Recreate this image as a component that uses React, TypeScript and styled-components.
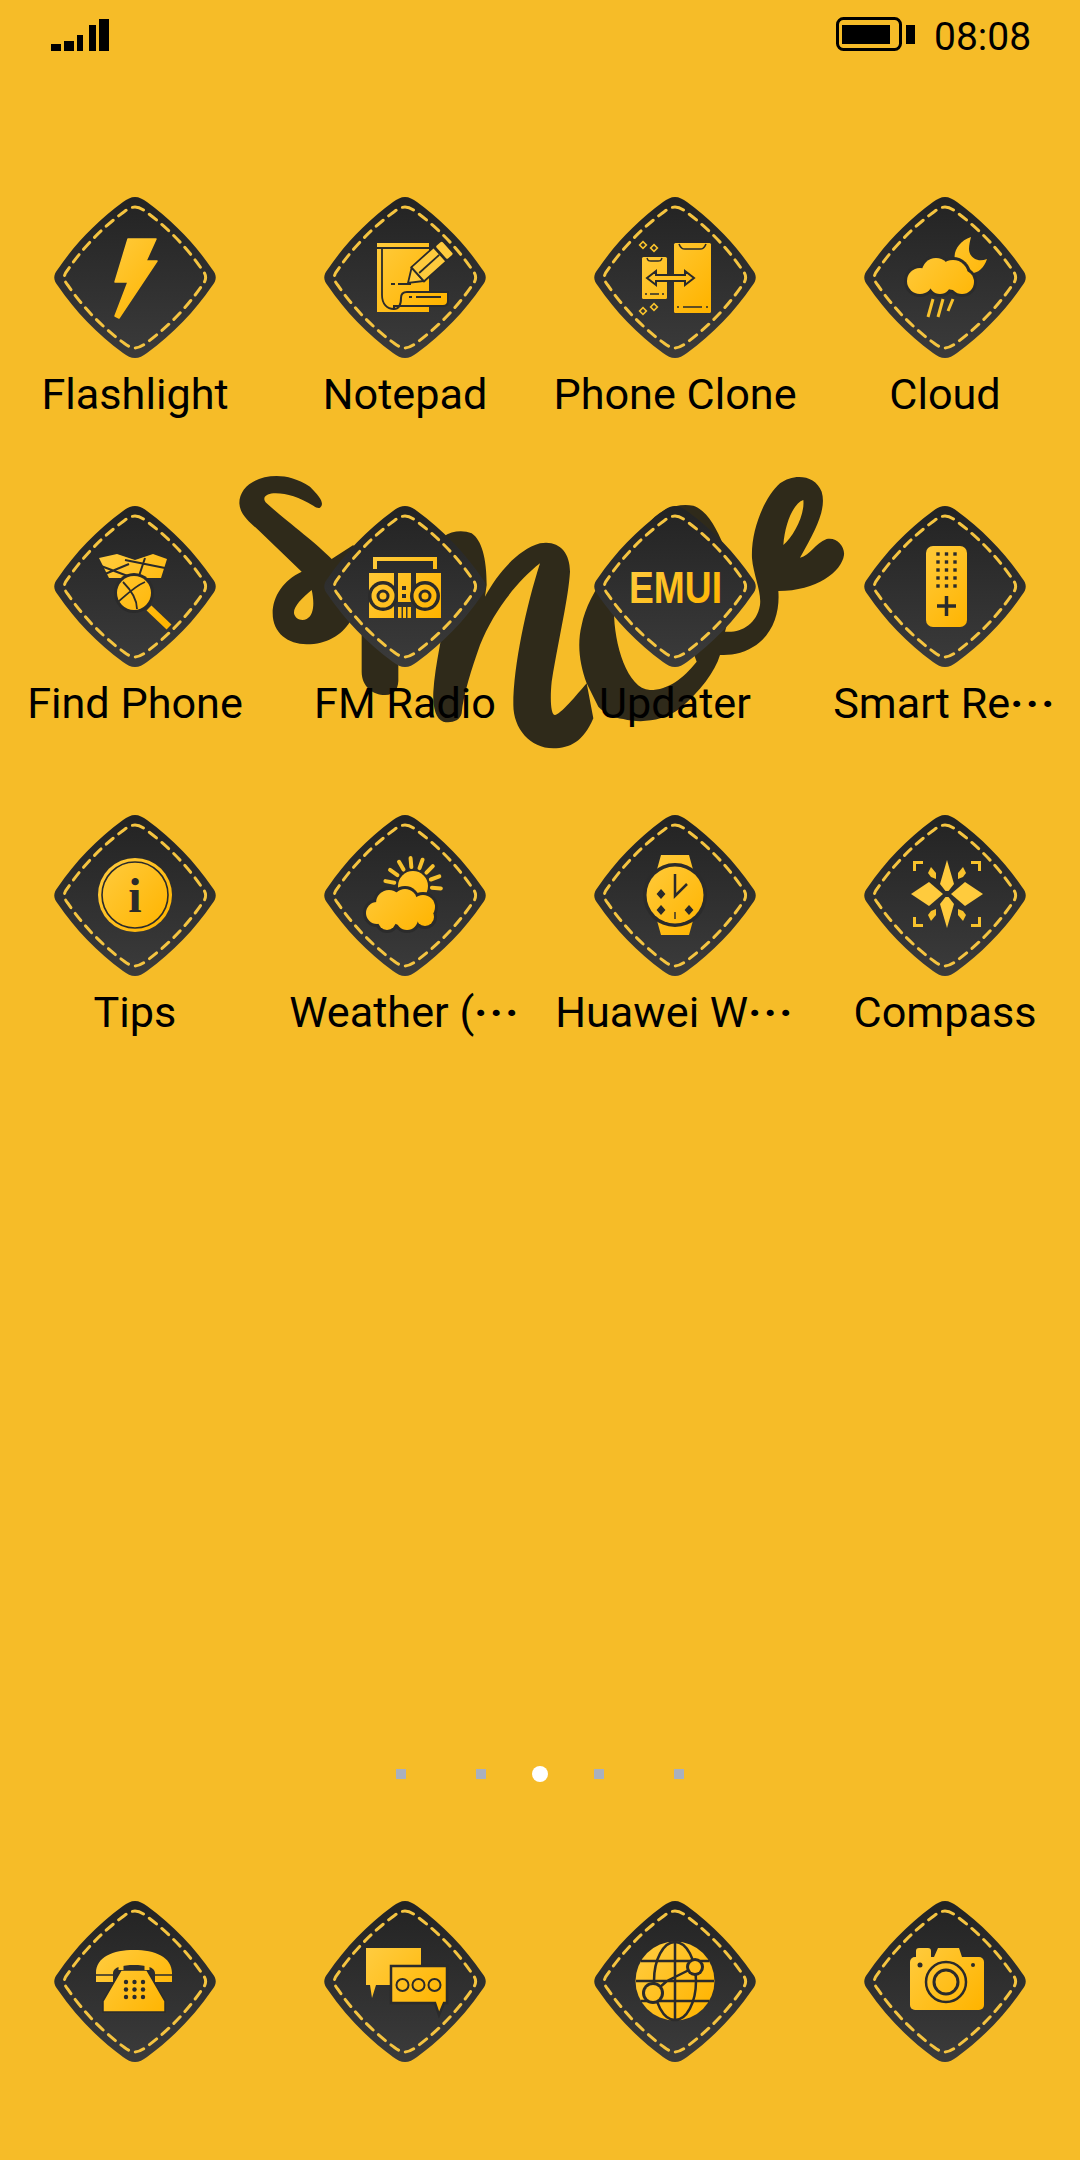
import * as React from 'react'
import styled, {createGlobalStyle} from 'styled-components'

const DARK = '#2b2b2b'
const GOLD = 'url(#glyphGold)'
const BADGE_PATH = 'M80 0C84 0 88 2 92 5C118 24 140 47 157 72C162 78 162 83 157 89C140 114 118 137 92 156C88 159 84 161 80 161C76 161 72 159 68 156C42 137 20 114 3 89C-2 83 -2 78 3 72C20 47 42 24 68 5C72 2 76 0 80 0Z'

const GlobalStyle = createGlobalStyle`
    html, body {
        margin: 0;
        padding: 0;
        background: #f6bc28;
    }
`

const Screen = styled.div`
    position: relative;
    width: 1080px;
    height: 2160px;
    overflow: hidden;
    background: #f6bc28;
    font-family: Roboto, "Liberation Sans", sans-serif;
    color: #000;
`

const Defs = styled.svg`
    position: absolute;
    width: 0;
    height: 0;
`

const Logo = styled.svg`
    position: absolute;
    left: 230px;
    top: 465px;
    width: 630px;
    height: 300px;
`

const Content = styled.div`
    position: relative;
    display: flex;
    flex-direction: column;
`

const StatusBar = styled.div`
    height: 70px;
    padding: 0 50px 0 51px;
    display: flex;
    justify-content: space-between;
`

const SignalIcon = styled.svg`
    width: 58px;
    height: 70px;
`

const StatusRight = styled.div`
    display: flex;
`

const BatteryIcon = styled.svg`
    width: 79px;
    height: 70px;
    margin-right: 19px;
`

const Clock = styled.div`
    width: 96px;
    padding-top: 15px;
    font-size: 39px;
    line-height: 45px;
    white-space: nowrap;
`

const AppGrid = styled.div`
    margin-top: 127px;
    display: grid;
    grid-template-columns: repeat(4, 270px);
    grid-auto-rows: 309px;
`

const Cell = styled.div`
    display: flex;
    flex-direction: column;
    align-items: center;
`

const BadgeSvg = styled.svg`
    display: block;
    width: 160px;
    height: 161px;
    overflow: visible;
`

const Label = styled.div`
    margin-top: 12px;
    font-size: 43.2px;
    line-height: 50px;
    white-space: nowrap;
`

const Cut = styled.span`
    font-weight: 700;
    letter-spacing: 2.5px;
`

const Pager = styled.div`
    margin-top: 642px;
    height: 16px;
    display: flex;
    justify-content: center;
    align-items: center;
    gap: 46px;
`

const Dot = styled.span<{$active?: boolean}>`
    display: block;
    width: ${p => p.$active ? 16 : 10}px;
    height: ${p => p.$active ? 16 : 10}px;
    border-radius: ${p => p.$active ? '50%' : '0'};
    background: ${p => p.$active ? '#fff' : '#a9b0be'};

    &:first-child {
        margin-right: 24px;
    }

    &:last-child {
        margin-left: 24px;
    }
`

const Dock = styled.div`
    margin-top: 119px;
    display: grid;
    grid-template-columns: repeat(4, 270px);
    justify-items: center;
`

const Badge = ({children}: {children: React.ReactNode}) => (
    <BadgeSvg viewBox='0 0 160 161'>
        <path d={BADGE_PATH} fill='url(#badgeFill)'/>
        <path
            d={BADGE_PATH}
            transform='translate(80 80.5) scale(.875) translate(-80 -80.5)'
            fill='none'
            stroke='#f5c440'
            strokeWidth='3.4'
            strokeLinecap='round'
            strokeDasharray='10.5 8'
        />
        {children}
    </BadgeSvg>
)

const Puff = ({circles, gap}: {circles: number[][], gap: number}) => (
    <>
        {circles.map(([x, y, r]) => <circle key={`o${x}${y}`} cx={x} cy={y} r={r + gap} fill={DARK}/>)}
        {circles.map(([x, y, r]) => <circle key={`f${x}${y}`} cx={x} cy={y} r={r} fill={GOLD}/>)}
    </>
)

const Flash = () => (
    <path
        d='M73 42H101L91 64H102L64 121L60 119L73 85H60Z'
        fill={GOLD}
        stroke={GOLD}
        strokeWidth='1.5'
        strokeLinejoin='round'
    />
)

const Note = () => (
    <g>
        <rect x='52' y='46' width='52' height='69' fill={GOLD}/>
        <path d='M52 51H105M57 51V98C57 107 62 112 69 112M66 87H70M73 87H86' stroke={DARK} strokeWidth='1.8' fill='none'/>
        <path d='M69 112C75 112 76 107 76 101C76 97 78 95 82 95H123V104C123 107 121 109 118 109H69Z' fill={GOLD} stroke={DARK} strokeWidth='2'/>
        <path d='M84 100H87M91 100H116' stroke={DARK} strokeWidth='2'/>
        <g transform='translate(83 86) rotate(-42)' stroke={DARK} strokeWidth='1.8' fill={GOLD}>
            <path d='M0 0L13-9V9Z'/>
            <rect x='13' y='-9.5' width='30' height='19'/>
            <rect x='44' y='-9.5' width='10' height='19' rx='2.5'/>
            <path d='M15 0H42' fill='none'/>
        </g>
    </g>
)

const PhoneClone = () => (
    <g>
        <rect x='79' y='46' width='37' height='70' rx='1.5' fill={GOLD}/>
        <path d='M84 47C86 52 88 52 90 52H105C107 52 109 52 111 47' stroke={DARK} strokeWidth='1.6' fill='none'/>
        <path d='M82 110H84M88 110H107M111 110H113' stroke={DARK} strokeWidth='1.6'/>
        <rect x='47' y='60' width='25' height='42' rx='1.5' fill={GOLD}/>
        <path d='M52 61C53 64 54 64 56 64H63C65 64 66 64 67 61' stroke={DARK} strokeWidth='1.4' fill='none'/>
        <path d='M50 97H52M55 97H64M67 97H69' stroke={DARK} strokeWidth='1.6'/>
        <path d='M52 81L61 74V78H90V74L99 81L90 88V84H61V88Z' fill={GOLD} stroke={DARK} strokeWidth='2'/>
        {[[48, 48], [59, 51], [48, 114], [59, 110]].map(([x, y]) => (
            <rect key={`${x}${y}`} x={x - 2.4} y={y - 2.4} width='4.8' height='4.8' transform={`rotate(45 ${x} ${y})`} fill='none' stroke='#f8c22c' strokeWidth='1.6'/>
        ))}
    </g>
)

const CloudIcon = () => (
    <g>
        <path d='M106 40C88 46 84 66 98 74C108 80 118 74 122 62C112 66 104 60 104 52C104 48 105 44 106 40Z' fill={GOLD}/>
        <Puff gap={3} circles={[[55, 84, 13], [71, 75, 14], [88, 78, 15], [97, 85, 12], [75, 86, 11]]}/>
        <path d='M68 102L63 120M78 102L73 120M88 102L83 114' stroke='#f8c22c' strokeWidth='3'/>
    </g>
)

const FindPhone = () => (
    <g>
        <path d='M44 52L62 48L80 54L98 48L112 53L106 72H54Z' fill={GOLD}/>
        <path d='M46 60L78 72M70 54L110 62M50 68L74 58M90 52L84 70' stroke={DARK} strokeWidth='2' fill='none'/>
        <circle cx='79' cy='87' r='20' fill={DARK}/>
        <circle cx='79' cy='87' r='17' fill={GOLD}/>
        <path d='M68 76C76 84 82 94 82 103M90 76C80 80 70 90 63 96' stroke={DARK} strokeWidth='1.8' fill='none'/>
        <path d='M94 102L114 121' stroke={GOLD} strokeWidth='7'/>
    </g>
)

const Radio = () => (
    <g>
        <path d='M50 63V53H110V63' fill='none' stroke={GOLD} strokeWidth='4'/>
        <rect x='44' y='67' width='25' height='45' fill={GOLD}/>
        <rect x='91' y='67' width='25' height='45' fill={GOLD}/>
        <rect x='73' y='67' width='13' height='29' fill={GOLD}/>
        <path d='M73 101H76.5V112H73ZM78 101H81V112H78ZM82.5 101H86V112H82.5Z' fill={GOLD}/>
        <path d='M77 80H81V84H77ZM77 88H81V92H77Z' fill={DARK}/>
        {[58, 100].map(x => (
            <g key={x}>
                <circle cx={x} cy='90' r='15' fill={DARK}/>
                <circle cx={x} cy='90' r='11.5' fill={GOLD}/>
                <circle cx={x} cy='90' r='6.5' fill={DARK}/>
                <circle cx={x} cy='90' r='3.5' fill={GOLD}/>
            </g>
        ))}
    </g>
)

const Emui = () => (
    <text
        x='34'
        y='97'
        fontFamily='"Liberation Sans", sans-serif'
        fontWeight='700'
        fontSize='44'
        textLength='93'
        lengthAdjust='spacingAndGlyphs'
        fill={GOLD}
    >
        EMUI
    </text>
)

const Remote = () => (
    <g>
        <rect x='61' y='40' width='41' height='81' rx='7' fill={GOLD}/>
        {[48, 56, 64, 72, 80].flatMap(y => [73, 81.5, 90].map(x => (
            <rect key={`${x}${y}`} x={x - 1.7} y={y - 1.7} width='3.4' height='3.4' fill={DARK}/>
        )))}
        <path d='M81.5 90V110M72 100H91' stroke={DARK} strokeWidth='3.5'/>
    </g>
)

const Tips = () => (
    <g>
        <circle cx='80' cy='80' r='37' fill={GOLD}/>
        <circle cx='80' cy='80' r='33' fill='none' stroke={DARK} strokeWidth='1.6'/>
        <text x='80' y='97' textAnchor='middle' fontFamily='"Liberation Serif", serif' fontWeight='700' fontSize='48' fill={DARK}>i</text>
    </g>
)

const Weather = () => (
    <g>
        <circle cx='88' cy='71' r='15' fill={GOLD}/>
        {[-170, -145, -120, -95, -70, -45, -20, 5].map(a => {
            const rad = a * Math.PI / 180
            return (
                <path
                    key={a}
                    d={`M${88 + 19 * Math.cos(rad)} ${71 + 19 * Math.sin(rad)}L${88 + 28 * Math.cos(rad)} ${71 + 28 * Math.sin(rad)}`}
                    stroke='#f8c22c'
                    strokeWidth='4'
                    strokeLinecap='round'
                />
            )
        })}
        <Puff gap={3} circles={[[52, 98, 11], [64, 88, 13], [80, 86, 12], [98, 92, 12], [100, 102, 9], [82, 104, 11], [62, 106, 9], [76, 96, 14]]}/>
    </g>
)

const Watch = () => (
    <g>
        <path d='M66 40H94L99 58H61ZM61 102H99L94 120H66Z' fill={GOLD}/>
        <circle cx='80' cy='80' r='32' fill={DARK}/>
        <circle cx='80' cy='80' r='28.5' fill={GOLD}/>
        <path d='M80 59V81L92 69' fill='none' stroke={DARK} strokeWidth='2.5'/>
        <path d='M66 75L69.5 79L66 83L62.5 79ZM66 91L69.5 95L66 99L62.5 95ZM94 91L97.5 95L94 99L90.5 95ZM80 97V104' fill={DARK} stroke={DARK} strokeWidth='1.4'/>
    </g>
)

const Compass = () => (
    <g transform='translate(82 79)'>
        {[[1, 1], [-1, 1], [1, -1], [-1, -1]].map(([sx, sy]) => (
            <g key={`${sx}${sy}`} transform={`scale(${sx} ${sy})`}>
                <path d='M0-34L7-10L1.5-3H0Z' fill={GOLD}/>
                <path d='M36 0L18-12L4 0Z' fill={GOLD}/>
                <path d='M16-27L11-21L11-15L16-17L19-21Z' fill='#f8c22c'/>
                <path d='M24-33H34V-23H31V-30H24Z' fill='#f8c22c'/>
            </g>
        ))}
    </g>
)

const Phone = () => (
    <g>
        <path d='M41 72C41 56 58 49 79 49C100 49 117 56 117 72V81H100V72C100 66 90 64 79 64C68 64 58 66 58 72V81H41Z' fill={GOLD}/>
        <path d='M41 74H58M100 74H117' stroke={DARK} strokeWidth='1.6'/>
        <path d='M66 69H92L110 100V111H48V100Z' fill={GOLD} stroke={DARK} strokeWidth='1.5'/>
        <path d='M66 64V69M92 64V69' stroke={GOLD} strokeWidth='5'/>
        {[81, 88.5, 96].flatMap(y => [71, 79.5, 88].map(x => <circle key={`${x}${y}`} cx={x} cy={y} r='2.2' fill={DARK}/>))}
    </g>
)

const Messages = () => (
    <g>
        <path d='M41 47H96V84H51L47 97L45 84H41Z' fill={GOLD}/>
        <path d='M66 65H122V102H119L114 114L110 102H66Z' fill={GOLD} stroke={DARK} strokeWidth='2.5'/>
        {[77.5, 93.5, 109.5].map(x => <circle key={x} cx={x} cy='84' r='6' fill='none' stroke={DARK} strokeWidth='2'/>)}
    </g>
)

const Globe = () => (
    <g>
        <circle cx='80' cy='80' r='39.5' fill={GOLD}/>
        <g fill='none' stroke={DARK} strokeWidth='2.5'>
            <ellipse cx='80' cy='80' rx='21' ry='39'/>
            <path d='M80 41V119M46 60H114M41 80H119M46 100H114M58 92L72 80L100 66'/>
        </g>
        <circle cx='100' cy='66' r='9' fill={DARK}/>
        <circle cx='100' cy='66' r='6' fill={GOLD}/>
        <circle cx='58' cy='92' r='11' fill={DARK}/>
        <circle cx='58' cy='92' r='8' fill={GOLD}/>
    </g>
)

const Camera = () => (
    <g>
        <path d='M51 56V50C51 48 52 47 54 47H63C65 47 66 48 66 50V56ZM69 56L73 47H94L97 56Z' fill={GOLD}/>
        <rect x='45' y='56' width='74' height='53' rx='5' fill={GOLD}/>
        <circle cx='81' cy='81' r='20' fill='none' stroke={DARK} strokeWidth='2.5'/>
        <circle cx='81' cy='81' r='12' fill='none' stroke={DARK} strokeWidth='3'/>
        <circle cx='55' cy='64' r='2.5' fill={DARK}/>
        <circle cx='108' cy='64' r='2' fill={DARK}/>
    </g>
)

const APPS = [
    {name: 'Flashlight', glyph: <Flash/>},
    {name: 'Notepad', glyph: <Note/>},
    {name: 'Phone Clone', glyph: <PhoneClone/>},
    {name: 'Cloud', glyph: <CloudIcon/>},
    {name: 'Find Phone', glyph: <FindPhone/>},
    {name: 'FM Radio', glyph: <Radio/>},
    {name: 'Updater', glyph: <Emui/>},
    {name: 'Smart Re', cut: true, glyph: <Remote/>},
    {name: 'Tips', glyph: <Tips/>},
    {name: 'Weather (', cut: true, glyph: <Weather/>},
    {name: 'Huawei W', cut: true, glyph: <Watch/>},
    {name: 'Compass', glyph: <Compass/>},
]

const DOCK = [<Phone key='phone'/>, <Messages key='messages'/>, <Globe key='globe'/>, <Camera key='camera'/>]

export default function App() {
    return (
        <Screen>
            <GlobalStyle/>
            <Defs>
                <defs>
                    <linearGradient id='badgeFill' x1='0' y1='0' x2='0' y2='1'>
                        <stop offset='0' stopColor='#232323'/>
                        <stop offset='1' stopColor='#3b3b3b'/>
                    </linearGradient>
                    <linearGradient id='glyphGold' gradientUnits='userSpaceOnUse' x1='45' y1='50' x2='115' y2='110'>
                        <stop offset='0' stopColor='#ffcb3d'/>
                        <stop offset='1' stopColor='#ffb400'/>
                    </linearGradient>
                </defs>
            </Defs>
            <Logo viewBox='0 0 1890 900' fill='#2f2a1a'>
                <path
                    fillRule='evenodd'
                    d='M270 128C285 115 270 95 240 65C205 42 170 33 140 33C80 33 28 65 28 115C30 150 60 172 85 195L215 320C160 345 128 395 128 445C128 505 175 538 230 538C290 538 335 510 360 470L420 350L370 240L305 282C260 235 165 165 110 115C95 100 105 88 130 85C165 83 205 95 250 122C258 128 265 130 270 128ZM245 375C215 400 190 425 192 445C195 462 215 470 230 462C255 450 252 405 245 375Z'
                />
                <path d='M395 500V620C395 665 430 690 465 690C495 690 507 670 505 635V500Z'/>
                <path d='M640 215C665 197 700 195 725 205C755 225 770 280 770 360L765 395C800 330 860 255 930 235C985 225 1020 260 1020 320C1015 400 990 500 965 650C960 700 962 750 975 750C990 750 1040 690 1070 655L1090 760C1060 830 1020 850 970 850C900 850 850 790 850 720C850 600 890 420 930 295C860 350 790 440 750 540C725 610 700 690 695 745C690 770 660 775 640 770C615 760 608 720 610 680C615 600 640 500 650 420Z'/>
                <path
                    fillRule='evenodd'
                    transform='translate(930 0)'
                    d='M140 655C120 600 110 540 125 480C135 430 165 370 200 330L330 170C370 125 420 115 460 122C500 135 530 190 550 240L600 330L555 500C600 505 650 480 660 420C665 380 640 330 636 280C632 200 670 100 720 55C760 25 825 28 845 80C860 130 830 190 780 278C810 272 825 235 860 222C890 215 915 245 912 270C905 320 830 378 715 378C720 440 700 510 640 545C605 568 570 570 540 570C525 620 480 680 420 730C370 770 300 775 250 762C220 758 195 745 175 725ZM222 430C220 530 260 672 330 675C385 675 430 640 470 590L400 400ZM790 105C760 115 735 175 730 240C760 215 795 150 790 105Z'
                />
            </Logo>
            <Content>
                <StatusBar>
                    <SignalIcon viewBox='51 0 58 70'>
                        <path d='M51 44H61V51H51ZM64 41H74V51H64ZM77 35H83V51H77ZM89 25H96V51H89ZM99 19H109V51H99Z'/>
                    </SignalIcon>
                    <StatusRight>
                        <BatteryIcon viewBox='836 0 79 70'>
                            <rect x='837.5' y='18.5' width='63' height='31' rx='6' fill='none' stroke='#000' strokeWidth='3'/>
                            <path d='M842 25H890V44H842ZM906 25H915V44H906Z'/>
                        </BatteryIcon>
                        <Clock>08:08</Clock>
                    </StatusRight>
                </StatusBar>
                <AppGrid>
                    {APPS.map(app => (
                        <Cell key={app.name}>
                            <Badge>{app.glyph}</Badge>
                            <Label>{app.name}{app.cut && <Cut>···</Cut>}</Label>
                        </Cell>
                    ))}
                </AppGrid>
                <Pager>
                    <Dot/>
                    <Dot/>
                    <Dot $active/>
                    <Dot/>
                    <Dot/>
                </Pager>
                <Dock>
                    {DOCK.map(glyph => <Badge key={glyph.key}>{glyph}</Badge>)}
                </Dock>
            </Content>
        </Screen>
    )
}
